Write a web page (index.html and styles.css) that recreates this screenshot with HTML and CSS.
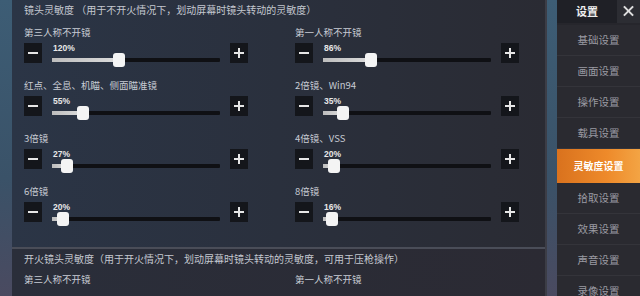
FILE: index.html
```html
<!DOCTYPE html>
<html lang="zh">
<head>
<meta charset="utf-8">
<link rel="stylesheet" href="styles.css">
</head>
<body>
<div class="page">
  <div class="main">
    <section class="panel">
      <div class="panel-title">镜头灵敏度 （用于不开火情况下，划动屏幕时镜头转动的灵敏度）</div>
      <div class="grid">
        <div class="setting">
          <div class="label">第三人称不开镜</div>
          <div class="control"><span class="btn minus"></span><div class="slider"><span class="pct">120%</span><div class="track"><div class="fill" style="width:40%"></div><span class="thumb" style="left:40%"></span></div></div><span class="btn plus"></span></div>
        </div>
        <div class="setting">
          <div class="label">第一人称不开镜</div>
          <div class="control"><span class="btn minus"></span><div class="slider"><span class="pct">86%</span><div class="track"><div class="fill" style="width:28.7%"></div><span class="thumb" style="left:28.7%"></span></div></div><span class="btn plus"></span></div>
        </div>
        <div class="setting">
          <div class="label">红点、全息、机瞄、侧面瞄准镜</div>
          <div class="control"><span class="btn minus"></span><div class="slider"><span class="pct">55%</span><div class="track"><div class="fill" style="width:18.3%"></div><span class="thumb" style="left:18.3%"></span></div></div><span class="btn plus"></span></div>
        </div>
        <div class="setting">
          <div class="label">2倍镜、Win94</div>
          <div class="control"><span class="btn minus"></span><div class="slider"><span class="pct">35%</span><div class="track"><div class="fill" style="width:11.7%"></div><span class="thumb" style="left:11.7%"></span></div></div><span class="btn plus"></span></div>
        </div>
        <div class="setting">
          <div class="label">3倍镜</div>
          <div class="control"><span class="btn minus"></span><div class="slider"><span class="pct">27%</span><div class="track"><div class="fill" style="width:9%"></div><span class="thumb" style="left:9%"></span></div></div><span class="btn plus"></span></div>
        </div>
        <div class="setting">
          <div class="label">4倍镜、VSS</div>
          <div class="control"><span class="btn minus"></span><div class="slider"><span class="pct">20%</span><div class="track"><div class="fill" style="width:6.7%"></div><span class="thumb" style="left:6.7%"></span></div></div><span class="btn plus"></span></div>
        </div>
        <div class="setting">
          <div class="label">6倍镜</div>
          <div class="control"><span class="btn minus"></span><div class="slider"><span class="pct">20%</span><div class="track"><div class="fill" style="width:6.7%"></div><span class="thumb" style="left:6.7%"></span></div></div><span class="btn plus"></span></div>
        </div>
        <div class="setting">
          <div class="label">8倍镜</div>
          <div class="control"><span class="btn minus"></span><div class="slider"><span class="pct">16%</span><div class="track"><div class="fill" style="width:5.3%"></div><span class="thumb" style="left:5.3%"></span></div></div><span class="btn plus"></span></div>
        </div>
      </div>
    </section>
    <section class="panel panel2">
      <div class="panel-title">开火镜头灵敏度（用于开火情况下，划动屏幕时镜头转动的灵敏度，可用于压枪操作）</div>
      <div class="grid">
        <div class="label">第三人称不开镜</div>
        <div class="label">第一人称不开镜</div>
      </div>
    </section>
  </div>
  <aside class="sidebar">
    <div class="side-head"><span class="side-title">设置</span><span class="close"></span></div>
    <div class="item">基础设置</div>
    <div class="item">画面设置</div>
    <div class="item">操作设置</div>
    <div class="item">载具设置</div>
    <div class="item active">灵敏度设置</div>
    <div class="item">拾取设置</div>
    <div class="item">效果设置</div>
    <div class="item">声音设置</div>
    <div class="item">录像设置</div>
  </aside>
</div>
</body>
</html>
```

FILE: styles.css
```css
* { box-sizing: border-box; }
html, body { margin: 0; padding: 0; }
body {
  width: 640px;
  height: 296px;
  overflow: hidden;
  font-family: "Noto Sans CJK SC", "Noto Sans", sans-serif;
  background: linear-gradient(180deg, #3d5d75 0%, #3a5268 60%, #4a4a60 100%);
}
.page {
  display: flex;
  height: 296px;
  padding-left: 12px;
}
.main {
  width: 535px;
  display: flex;
  flex-direction: column;
  border-right: 2px solid #3c3d46;
}
.panel {
  background: linear-gradient(90deg, #2b3546 0%, #2a303d 50%, #2a2b33 100%);
  padding: 2px 0 0 12px;
  height: 247px;
}
.panel-title {
  font-size: 10px;
  line-height: 16px;
  color: #c4c8d0;
  white-space: nowrap;
  overflow: hidden;
  height: 16px;
}
.grid {
  display: grid;
  grid-template-columns: 224px 224px;
  column-gap: 47px;
  margin-top: 7px;
}
.setting {
  height: 53px;
}
.label {
  font-size: 9.5px;
  line-height: 14px;
  color: #c8ccd4;
  white-space: nowrap;
}
.control {
  display: flex;
  align-items: center;
  margin-top: 4px;
  height: 20px;
}
.btn {
  width: 18px;
  height: 20px;
  background: #14161b;
  position: relative;
  flex: none;
}
.btn::before {
  content: "";
  position: absolute;
  left: 4px;
  right: 4px;
  top: 9px;
  height: 2px;
  background: #e6e6e6;
}
.btn.plus::after {
  content: "";
  position: absolute;
  top: 5px;
  bottom: 5px;
  left: 8px;
  width: 2px;
  background: #e6e6e6;
}
.slider {
  flex: 1;
  margin: 0 10px;
  height: 20px;
  display: flex;
  flex-direction: column;
}
.pct {
  font-family: "Liberation Sans", sans-serif;
  font-weight: bold;
  font-size: 8.5px;
  line-height: 10px;
  color: #e8e8e8;
  padding-left: 1px;
}
.track {
  position: relative;
  height: 4px;
  margin-top: 5px;
  background: #0f1014;
  border-radius: 1px;
}
.fill {
  height: 4px;
  background: linear-gradient(90deg, #bdbdbd, #dcdcdc);
}
.thumb {
  position: absolute;
  top: -5px;
  width: 12px;
  height: 14px;
  margin-left: -6px;
  background: #f4f4f4;
  border-radius: 3px;
}
.panel2 {
  flex: 1;
  height: auto;
  border-top: 2px solid #4a4d58;
  background: linear-gradient(90deg, #2a2e3a 0%, #2b2a33 100%);
  padding-top: 2px;
}
.panel2 .grid {
  margin-top: 5px;
}
.sidebar {
  margin-left: 10px;
  flex: 1;
  background: #2a2a30;
  display: flex;
  flex-direction: column;
}
.side-head {
  display: flex;
  height: 25px;
  background: #1f2026;
  border-bottom: 2px solid #26262c;
}
.side-title {
  flex: 1;
  font-size: 11px;
  line-height: 23px;
  color: #eeeeee;
  text-align: center;
  font-weight: bold;
}
.close {
  width: 23px;
  height: 23px;
  background: #2c2d33;
  position: relative;
}
.close::before, .close::after {
  content: "";
  position: absolute;
  left: 5px;
  right: 5px;
  top: 10px;
  height: 2px;
  background: #e0e0e0;
  transform: rotate(45deg);
}
.close::after { transform: rotate(-45deg); }
.item {
  height: 31px;
  line-height: 30px;
  text-align: center;
  font-size: 10.5px;
  color: #9a9aa2;
  border-bottom: 1px solid #34343a;
  flex: none;
}
.item.active {
  height: 34px;
  line-height: 34px;
  font-size: 10px;
  color: #ffffff;
  font-weight: bold;
  background: linear-gradient(90deg, #d9721e 0%, #ee8a2a 60%, #f3a444 100%);
  border: none;
}
```
